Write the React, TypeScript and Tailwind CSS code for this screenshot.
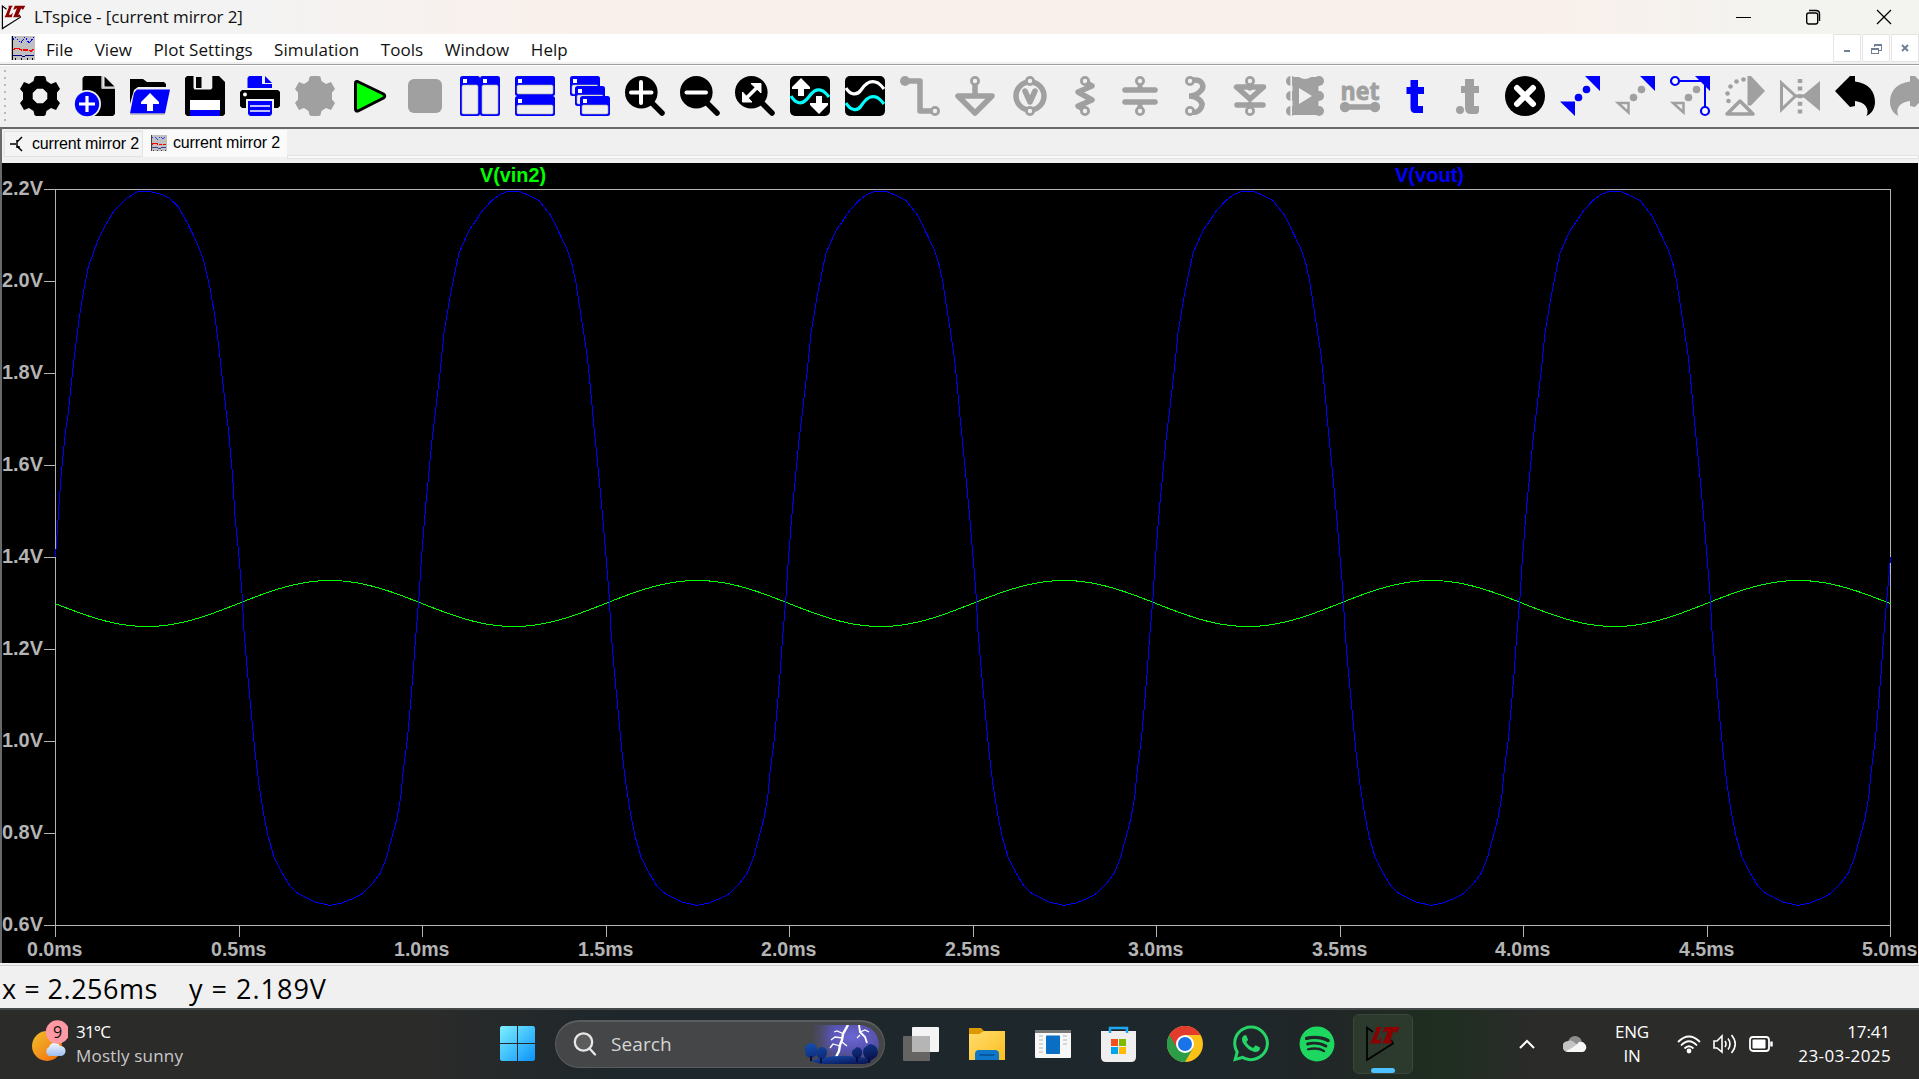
import React from "react";
import { FaWhatsapp, FaSpotify } from "react-icons/fa";

const GRAY = "#a0a0a0";
const BLUE = "#0000ff";
const FACE = "#f0f0f0";

function Icon({ children }: { children: React.ReactNode }) {
  return (
    <svg className="h-10 w-10 shrink-0 overflow-visible" viewBox="0 0 40 40" fill="none">
      {children}
    </svg>
  );
}

const GEAR =
  "M14.5 1L16 0H24L25.5 1L26.5 5L31 8L36 6L40 13L37 16.5V23.5L40 27L36 34L31 32L26.5 35L25.5 39L24 40H16L14.5 39L13.5 35L9 32L4 34L0 27L3 23.5V16.5L0 13L4 6L9 8L13.5 5Z";

function Win({ x, y, w, h }: { x: number; y: number; w: number; h: number }) {
  return (
    <g>
      <rect x={x} y={y} width={w} height={h} rx="2.5" fill={BLUE} />
      <rect x={x + 2} y={y + 9} width={w - 4} height={h - 11} rx="1.5" fill={FACE} stroke="#a8a8a8" strokeWidth="0.6" />
      <rect x={x + 3} y={y + 3} width="4" height="4" fill="#fff" />
    </g>
  );
}

function Lens({ children }: { children: React.ReactNode }) {
  return (
    <Icon>
      <path d="M27 27L37 37" stroke="#000" strokeWidth="5.5" strokeLinecap="round" />
      <circle cx="16.3" cy="16.3" r="16.3" fill="#000" />
      {children}
    </Icon>
  );
}

function Pin({ x, y, c = GRAY }: { x: number; y: number; c?: string }) {
  return <circle cx={x} cy={y} r="3.6" fill={FACE} stroke={c} strokeWidth="2.8" />;
}

const toolbar: React.ReactNode[] = [
  <Icon><path fillRule="evenodd" fill="#000" d={GEAR + "M17 12.7L12.7 17V23L17 27.3H23L27.3 23V17L23 12.7Z"} /></Icon>,
  <Icon>
    <path d="M9.5 0H26.5V12.5H40V38L38 40H7.5V2Z" fill="#000" />
    <path d="M29.5 0.5L39.5 10.5H29.5Z" fill="#000" />
    <path d="M27.5 0V12H40" stroke="#c8c8c8" strokeWidth="1.5" />
    <circle cx="12" cy="28" r="14" fill={FACE} />
    <circle cx="12" cy="28" r="12.2" fill={BLUE} />
    <path d="M12 20V36M4 28H20" stroke="#fff" strokeWidth="3.2" />
  </Icon>,
  <Icon>
    <path d="M0 28V3H13L17 6H34L36 8V11H8L4 14Z" fill="#000" />
    <path d="M7 13.5H40L35 37.5H0L4 17Z" fill={BLUE} />
    <path d="M0 38.2H35" stroke="#aaa" strokeWidth="1" />
    <path d="M20 17L29 26V28H23V35H17V28H11V26Z" fill="#fff" />
  </Icon>,
  <Icon>
    <path d="M2 0H34L40 6V38L38 40H2L0 38V2Z" fill="#000" />
    <path d="M8.5 0H27.3V12L26 13.5H9.5L8.5 12Z" fill={FACE} />
    <path d="M11 1H16.5V12H11Z" fill="#000" />
    <path d="M5 24H35V34H5Z" fill="#fff" />
    <path d="M5 34H35V40H5Z" fill={BLUE} />
  </Icon>,
  <Icon>
    <path d="M9 0H22V8H32V12H7.5V2Z" fill={BLUE} />
    <path d="M25 0L32 7H25Z" fill={BLUE} />
    <path d="M2 14H38L40 16V30L38 32H34V23H6V32H2L0 30V16Z" fill="#000" />
    <circle cx="5" cy="18.5" r="2" fill="#fff" />
    <path d="M8 25H32V38L30 40H10L8 38Z" fill={BLUE} />
    <path d="M10 30H30M10 35H30" stroke="#fff" strokeWidth="1.6" />
  </Icon>,
  <Icon><path d={GEAR} fill={GRAY} /></Icon>,
  <Icon><path d="M5.5 7Q5.5 5 7.5 5.5L33.5 18Q36 20 33.5 22L8 35Q5.5 35.5 5.5 33Z" fill="#00ff00" stroke="#000" strokeWidth="3" strokeLinejoin="round" /></Icon>,
  <Icon><rect x="3" y="3" width="34" height="34" rx="6" fill={GRAY} /></Icon>,
  <Icon><Win x={0} y={0} w={20} h={40} /><Win x={20} y={0} w={20} h={40} /></Icon>,
  <Icon><Win x={0} y={0} w={40} h={20} /><Win x={0} y={20} w={40} h={20} /></Icon>,
  <Icon><Win x={0} y={0} w={30} h={20} /><Win x={5} y={10} w={30} h={20} /><Win x={10} y={20} w={30} h={20} /></Icon>,
  <Lens><path d="M16 6V27M6 16.5H26.5" stroke="#fff" strokeWidth="4" strokeLinecap="round" /></Lens>,
  <Lens><path d="M6.5 16.5H26" stroke="#fff" strokeWidth="4" strokeLinecap="round" /></Lens>,
  <Lens>
    <path d="M10 23.5L23.5 10" stroke="#fff" strokeWidth="3.5" />
    <path d="M16 7.5H26V17ZM7.5 16V26H17Z" fill="#fff" stroke="#fff" strokeLinejoin="round" />
  </Lens>,
  <Icon>
    <rect width="40" height="40" rx="5" fill="#000" />
    <path d="M1 20C5 27 11 29 16 24S24 11 33 15Q36 17 39 21" stroke="#00ffff" strokeWidth="3.2" />
    <path d="M11 2L20 11V13H14V20H8V13H2V11ZM29 38L38 29V27H32V20H26V27H20V29Z" fill="#fff" />
  </Icon>,
  <Icon>
    <rect width="40" height="40" rx="5" fill="#000" />
    <path d="M1 12C5 19 12 20 16 14S25 3 33 7Q36 9 39 13" stroke="#fff" strokeWidth="3.2" />
    <path d="M1 27C5 34 12 36 16 30S25 18 33 22Q36 24 39 28" stroke="#00ffff" strokeWidth="3.2" />
  </Icon>,
  <Icon>
    <path d="M5 5H20V35H34" stroke={GRAY} strokeWidth="5.5" strokeLinejoin="round" />
    <circle cx="5" cy="5" r="5" fill={GRAY} /><Pin x={35} y={35} />
  </Icon>,
  <Icon>
    <path d="M20 8V19" stroke={GRAY} strokeWidth="5.5" />
    <path d="M3 20H37L20 37Z" stroke={GRAY} strokeWidth="5.5" strokeLinejoin="round" /><Pin x={20} y={5} />
  </Icon>,
  <Icon>
    <circle cx="20" cy="20" r="14" stroke={GRAY} strokeWidth="5.5" />
    <path d="M15 15L20 26L25 15" stroke={GRAY} strokeWidth="5.5" strokeLinecap="round" strokeLinejoin="round" />
    <Pin x={20} y={5} /><Pin x={20} y={35} />
  </Icon>,
  <Icon>
    <path d="M20 6L27 10L13 16L27 24L13 30L20 34" stroke={GRAY} strokeWidth="5.5" strokeLinejoin="round" />
    <Pin x={20} y={5} /><Pin x={20} y={35} />
  </Icon>,
  <Icon>
    <path d="M5 14H35M5 26H35" stroke={GRAY} strokeWidth="5.5" strokeLinecap="round" />
    <path d="M20 7V14M20 26V33" stroke={GRAY} strokeWidth="5" />
    <Pin x={20} y={5} /><Pin x={20} y={35} />
  </Icon>,
  <Icon>
    <path d="M18 4C28 3 30 11 25.500 15C23 18 19 20 14 20C22 20 29 26 26.500 31C24 36 21 37 16 36" stroke={GRAY} strokeWidth="5.5" />
    <Pin x={15} y={5} /><Pin x={15} y={35} />
  </Icon>,
  <Icon>
    <path d="M6.5 11H33.5L20 23ZM7 29H33M20 7V12M20 28V34" stroke={GRAY} strokeWidth="5.5" strokeLinejoin="round" strokeLinecap="round" />
    <Pin x={20} y={5} /><Pin x={20} y={35} />
  </Icon>,
  <Icon>
    <g fill={GRAY}>
      <circle cx="6" cy="5" r="5" /><circle cx="6" cy="20" r="5" /><circle cx="6" cy="35" r="5" />
      <circle cx="34" cy="5" r="5" /><circle cx="34" cy="20" r="5" /><circle cx="34" cy="35" r="5" />
    </g>
    <path d="M6.2 0V40" stroke={FACE} strokeWidth="1.6" />
    <path d="M7.5 1H14Q20 5 26 1H33.5V39H7.5Z" fill={GRAY} />
    <path d="M14 12L27 20L14 28Z" fill={FACE} />
  </Icon>,
  <Icon>
    <text x="0.5" y="24" textLength="39" lengthAdjust="spacingAndGlyphs" fill={GRAY} stroke={GRAY} strokeWidth="0.8" className="font-['Open_Sans'] text-[25px] leading-none font-bold">net</text>
    <path d="M5 31H35" stroke={GRAY} strokeWidth="5.5" />
    <circle cx="5" cy="31" r="5.2" fill={GRAY} /><circle cx="35" cy="31" r="5.2" fill={GRAY} />
  </Icon>,
  <Icon><path d="M15.5 4H23V11H29V18H23V30H28V37H20Q15.5 37 15.5 32V18H11.5V11H15.5Z" fill={BLUE} /></Icon>,
  <Icon>
    <path d="M15 3H24V10H29V17H24V30H29V36L27 38H21Q15 38 15 32V17H11V10H15Z" fill={GRAY} />
    <circle cx="10" cy="34" r="4" fill={GRAY} />
  </Icon>,
  <Icon>
    <circle cx="20" cy="20" r="20" fill="#000" />
    <path d="M12 12L28 28M28 12L12 28" stroke="#fff" strokeWidth="6" strokeLinecap="round" />
  </Icon>,
  <Icon>
    <path d="M25 0H40V15ZM0 25.5H15V40Z" fill={BLUE} />
    <circle cx="18.5" cy="21.5" r="3.8" fill={BLUE} /><circle cx="26.5" cy="13.5" r="3.8" fill={BLUE} />
  </Icon>,
  <Icon>
    <path d="M25 0H40V15Z" fill={BLUE} />
    <path d="M3 27H13.5V36.5Z" stroke={GRAY} strokeWidth="2.5" />
    <circle cx="18.5" cy="21.5" r="3.8" fill={GRAY} /><circle cx="26.5" cy="13.5" r="3.8" fill={GRAY} />
  </Icon>,
  <Icon>
    <path d="M25 0H40V15Z" fill={BLUE} />
    <path d="M3 27H13.5V36.5Z" stroke={GRAY} strokeWidth="2.5" />
    <circle cx="18.5" cy="21.5" r="3.8" fill={GRAY} /><circle cx="26.5" cy="13.5" r="3.8" fill={GRAY} />
    <path d="M9 5H34M35 6V31" stroke={BLUE} strokeWidth="2" />
    <circle cx="5" cy="5" r="4" stroke={BLUE} strokeWidth="2.2" fill="#fff" />
    <circle cx="35" cy="35" r="4" stroke={BLUE} strokeWidth="2.2" fill="#fff" />
  </Icon>,
  <Icon>
    <path d="M22.5 0H26L40 15L26 29.5H22.5Z" fill={GRAY} />
    <path d="M2 38L15 25L28 38Z" fill={FACE} stroke={GRAY} strokeWidth="3.5" strokeLinejoin="round" />
    <g fill={GRAY}><circle cx="18.5" cy="3.5" r="2.3" /><circle cx="11.5" cy="5.5" r="2.3" /><circle cx="5.5" cy="10.5" r="2.3" /><circle cx="2.5" cy="17.5" r="2.3" /><circle cx="3.5" cy="25" r="2.3" /></g>
  </Icon>,
  <Icon>
    <path d="M1.5 7L15.5 20L1.5 33.5Z" stroke={GRAY} strokeWidth="3" />
    <path d="M40 5V35L22 20Z" fill={GRAY} />
    <path d="M20 3V38" stroke={GRAY} strokeWidth="4.5" strokeDasharray="4 3.6" />
    <path d="M16 20H24" stroke={GRAY} strokeWidth="3" />
  </Icon>,
  <Icon><path d="M0 15L15 0H20V5.5C34 7 40 16 40 26C40 33 36 38 31.5 40C35 33 30 26 20 25V30L15 31Z" fill="#000" /></Icon>,
  <Icon><path d="M40 15L25 0H20V5.5C6 7 0 16 0 26C0 33 4 38 8.5 40C5 33 10 26 20 25V30L25 31Z" fill={GRAY} /></Icon>,
];

function LTLogo({ className }: { className: string }) {
  return (
    <svg className={className} viewBox="0 0 36 36" fill="none">
      <path d="M8 6L2 1.5V34L28 17.5L26 14" stroke="#000" strokeWidth="1.7" />
      <path d="M11 1H17L15 4L11.5 14H14L17 11L15.5 17.5H5L7 14L11 4ZM20 1H35L32 6.5H30.5L29 4.5L25 14.5H27L26 17.5H17.5L19 14.5L23 4.5L19 6.5H17.5Z" fill="#8b0000" />
    </svg>
  );
}

function WaveDoc({ className }: { className: string }) {
  return (
    <svg className={className} viewBox="0 0 24 24" fill="none" shapeRendering="crispEdges">
      <rect width="24" height="24" fill="#c0c0c0" />
      <path d="M2 4L4 1L10 7L14 1L18 7L23 1" stroke={BLUE} strokeDasharray="2 1" />
      <path d="M1 14L6 12L11 14H16L20 15L23 13" stroke="#ff0000" strokeWidth="1.5" strokeDasharray="5 1" />
      <path d="M1 19H9L11 20H14L16 19H23" stroke="#000080" />
      <path d="M1 0V24M4 22V24M10 22V24M16 22V24M21 22V24" stroke="#000" />
    </svg>
  );
}

/* Plot frame edges and the width of one signal period (1 ms). */
const X0 = 55, X1 = 1890, Y0 = 189, Y1 = 925, PERIOD = 367;

const firstPeak = [
  [55.5, 557], [56, 549], [56.6, 541], [57.5, 527], [61.3, 473], [65.3, 433], [68.3, 413], [71.3, 383], [74.3, 357], [79.3, 317],
  [83.3, 293], [88.3, 267], [93.3, 253], [98, 240], [105, 226], [113.3, 212], [125.7, 199], [137.7, 191.5], [150, 191.5],
  [162, 194.5], [169, 198], [177.7, 206], [186.7, 221.7], [196, 240.7], [203.3, 259], [210, 288], [215, 317],
  [218.3, 343], [223.3, 387], [228.7, 432], [232.7, 477], [235, 517], [238.7, 553], [242.3, 597],
];
const trough = [
  [243.7, 627], [247, 667], [251, 710], [255, 752], [259, 785], [263.3, 812], [268.3, 837], [274, 857], [282, 873],
  [290, 886], [297.3, 893], [315, 902], [330, 905.5], [341.7, 903], [351.7, 899], [361.7, 894], [372.3, 884],
  [380.3, 873], [386.7, 857], [391.7, 838], [396.7, 820], [400.7, 797], [403.3, 770], [407.3, 740],
  [410.3, 707], [413.3, 670], [415.7, 637],
];
const peak = [
  [419, 597], [421.3, 560], [425.3, 510], [431.7, 443], [440, 373], [444, 333], [450, 297], [454, 277], [459, 253],
  [469.3, 230], [475, 222], [481.7, 211.7], [492.3, 200], [500, 194.5], [507.3, 191.5], [520, 191.5],
  [526.7, 194.5], [538.7, 200.3], [551, 215.7], [561.7, 238], [567.3, 250], [571.7, 263], [576, 283],
  [579, 303], [583.3, 330], [587.3, 357], [590.7, 390], [593.3, 420], [598.3, 470], [602.7, 517],
  [606, 557], [609.3, 597],
];

const vout: number[][] = [...firstPeak];
for (let k = 0; k < 5; k++) {
  trough.forEach(([x, y]) => vout.push([x + k * PERIOD, y]));
  if (k < 4) peak.forEach(([x, y]) => vout.push([x + k * PERIOD, y]));
}
vout.push([1887, 597], [1889, 575], [1890.5, 557]);

const vin: number[][] = [];
for (let x = X0; x <= X1 + 3; x += 3) {
  const t = Math.min(x, X1 + 1);
  vin.push([t, 603.5 + 23 * Math.sin((2 * Math.PI * (t - X0)) / PERIOD)]);
}

const toPoints = (p: number[][]) => p.map(([x, y]) => `${x},${y}`).join(" ");

function Plot() {
  const label = "font-['Liberation_Sans'] text-[19.5px] font-bold";
  return (
    <svg className="block h-[800px] w-[1916px] bg-black" viewBox="2 163 1916 800" fill="none">
      <g shapeRendering="crispEdges" stroke="#b4b4b4" strokeWidth="1">
        <rect x={X0 + 0.5} y={Y0 + 0.5} width={X1 - X0} height={Y1 - Y0} />
        {Array.from({ length: 9 }, (_, i) => (
          <path key={i} d={`M44 ${Y0 + i * 92 + 0.5}H55`} />
        ))}
        {Array.from({ length: 11 }, (_, i) => (
          <path key={i} d={`M${Math.round(X0 + i * 183.5) + 0.5} 925V937`} />
        ))}
      </g>
      <polyline points={toPoints(vin)} stroke="#00ff00" shapeRendering="crispEdges" />
      <polyline points={toPoints(vout)} stroke="#0000ff" shapeRendering="crispEdges" />
      <g className={label} fill="#b4b4b4">
        {Array.from({ length: 9 }, (_, i) => (
          <text key={i} x="2" y={Y0 + i * 92 + 6} textLength="41" lengthAdjust="spacingAndGlyphs">
            {(2.2 - i * 0.2).toFixed(1)}V
          </text>
        ))}
        {Array.from({ length: 11 }, (_, i) => (
          <text key={i} x={Math.round(X0 + i * 183.5) - 28} y="956" textLength="55.5" lengthAdjust="spacingAndGlyphs">
            {(i * 0.5).toFixed(1)}ms
          </text>
        ))}
      </g>
      <g className={label}>
        <text x="480" y="182" fill="#00ff00" textLength="66" lengthAdjust="spacingAndGlyphs">V(vin2)</text>
        <text x="1395" y="182" fill="#0000ff" textLength="69" lengthAdjust="spacingAndGlyphs">V(vout)</text>
      </g>
    </svg>
  );
}

function ChildButton({ children }: { children: React.ReactNode }) {
  return (
    <div className="flex h-7 w-7 items-center justify-center border border-[#e4e4e4] bg-white">
      <svg className="h-3 w-3" viewBox="0 0 12 12" fill="none" stroke="#6f8093" shapeRendering="crispEdges">{children}</svg>
    </div>
  );
}

function Taskbar() {
  return (
    <div className="flex h-[71px] shrink-0 items-center border-t-2 border-[#454848] bg-[linear-gradient(90deg,#2b2b2a_0%,#2b2b2a_22%,#1e272b_32%,#1e272b_64%,#212627_69%,#1f2e20_75%,#2b2b2a_80%,#2b2b2a_100%)] pb-[2px] pr-[29px] font-['Open_Sans','Noto_Sans',sans-serif] text-white">
      <div className="flex w-[500px] items-center pl-8">
        <svg className="mb-[6px] h-[42px] w-9" viewBox="0 0 36 42">
          <defs>
            <linearGradient id="sun" x1="0" y1="0" x2="1" y2="1"><stop stopColor="#f0c22c" /><stop offset="1" stopColor="#f4660c" /></linearGradient>
            <linearGradient id="cloud" x1="0" y1="0" x2="0" y2="1"><stop stopColor="#f2f7ff" /><stop offset="1" stopColor="#9dbdf0" /></linearGradient>
          </defs>
          <circle cx="15" cy="26" r="15" fill="url(#sun)" />
          <path d="M17 36A5 5 0 0 1 17 27A6 6 0 0 1 28 26A5 5 0 0 1 29 36Z" fill="url(#cloud)" />
          <circle cx="25.5" cy="12" r="11.7" fill="#ff99a4" />
          <text x="21" y="17.5" fill="#111" className="font-['Open_Sans'] text-[16px]">9</text>
        </svg>
        <div className="ml-2 text-[17px] leading-6">
          <div className="tracking-[-0.8px]">31°C</div>
          <div className="tracking-[0.2px] text-[#c9c9c9]">Mostly sunny</div>
        </div>
      </div>

      <svg className="h-[35px] w-[35px]" viewBox="0 0 35 35">
        <defs><linearGradient id="win" x1="0" y1="0" x2="1" y2="1"><stop stopColor="#7df0ff" /><stop offset="1" stopColor="#0a93fb" /></linearGradient></defs>
        <path d="M1.5 0H17V17H0V1.5ZM18 0H33.5L35 1.5V17H18ZM0 18H17V35H1.5L0 33.5ZM18 18H35V33.5L33.5 35H18Z" fill="url(#win)" />
      </svg>

      <div className="relative ml-5 flex h-12 w-[330px] items-center overflow-hidden rounded-full border border-t-2 border-[#5a5d5e] bg-[#444647] pl-[17px]">
        <svg className="h-6 w-6" viewBox="0 0 24 24" fill="none" stroke="#e8e8e8" strokeWidth="2.3">
          <circle cx="10.5" cy="10" r="8.7" fill="#5c5c5c" /><path d="M16.5 16.5L22 22.5" strokeLinecap="round" />
        </svg>
        <span className="ml-[14px] text-[19px] tracking-[0.1px] text-[#d6d6d6]">Search</span>
        <svg className="ml-auto mr-[5px] h-[39px] w-[74px]" viewBox="0 0 74 39">
          <defs>
            <radialGradient id="sky" cx="0.6" cy="0.3" r="0.7"><stop stopColor="#6b68d4" /><stop offset="0.5" stopColor="#5853b0" /><stop offset="1" stopColor="#4b4a66" /></radialGradient>
            <linearGradient id="fade"><stop stopColor="#444647" /><stop offset="1" stopColor="#444647" stopOpacity="0" /></linearGradient>
            <linearGradient id="tree" x1="0" y1="0" x2="1" y2="1"><stop stopColor="#1450b4" /><stop offset="1" stopColor="#0a0f4a" /></linearGradient>
          </defs>
          <path d="M6 0H56Q73 3 74 20Q72 36 58 39H20Q8 38 6 30Z" fill="url(#sky)" />
          <rect x="5" width="22" height="39" fill="url(#fade)" />
          <path d="M43 0L38 9L37 15L35 20L34 26L31 32" stroke="#fff" strokeWidth="2.4" fill="none" />
          <path d="M39 9L32 6L29 7M38 13L30 12L26 15M35 21L28 19L25 23M55 7L60 5L64 7M37 17L42 21M55 10L52 13" stroke="#fff" strokeWidth="1.3" fill="none" />
          <path d="M54 0L55 7L60 12L62 18" stroke="#fff" strokeWidth="1.9" fill="none" />
          <g fill="url(#tree)">
            <path d="M6 36Q30 27 68 34Q64 39 58 39H16Z" />
            <path d="M5 18Q12 18 12 26Q12 33 6 33Q0 33 0 26Q0 19 5 18ZM17 22Q23 23 22 29Q20 35 15 34Q11 32 11 27Q13 22 17 22ZM52 22Q58 23 57 29Q55 35 51 33Q46 31 47 26ZM65 19Q73 20 73 28Q71 36 62 34Q56 30 59 23Z" />
          </g>
          <path d="M6 31V36M16 33V38M52 32V37M64 33V38" stroke="#080c3a" strokeWidth="2" />
        </svg>
      </div>

      <div className="ml-[18px] flex items-center gap-[30px]">
        <svg className="h-9 w-9" viewBox="0 0 36 36">
          <rect x="9" y="1" width="27" height="25" rx="1" fill="#f4f4f4" />
          <rect x="0" y="10" width="27" height="25" rx="1" fill="#666463" />
          <rect x="9" y="10" width="18" height="16" fill="#b5b5b5" />
        </svg>
        <svg className="h-9 w-9" viewBox="0 0 36 36">
          <defs><linearGradient id="fold" x1="0" y1="0" x2="1" y2="1"><stop stopColor="#ffdc70" /><stop offset="1" stopColor="#fcbf1d" /></linearGradient></defs>
          <path d="M0 2H12L15 5V12H0Z" fill="#dd9a00" />
          <path d="M0 8H10L15 5H36V34H0Z" fill="url(#fold)" />
          <path d="M6 34V28Q6 24 10 24H26Q30 24 30 28V34Z" fill="#0f77c9" />
          <path d="M11 29H25" stroke="#084f91" strokeWidth="1.5" strokeLinecap="round" />
        </svg>
        <svg className="h-9 w-9" viewBox="0 0 36 36">
          <rect y="4" width="36" height="28" rx="1" fill="#f7f7f7" /><path d="M0 4H36V7H0Z" fill="#777" />
          <rect x="11" y="9.5" width="14" height="18.5" rx="0.7" fill="#0b6ec5" />
          <path d="M4 10H8M4 14H8M4 18H8M4 22H8M4 26H8M28 10H32M28 14H32M28 18H32" stroke="#d6d6d6" strokeWidth="2" />
        </svg>
        <svg className="h-9 w-9" viewBox="0 0 36 36">
          <path d="M9 8V2H26V8" stroke="#1ea7f2" strokeWidth="2.5" fill="none" />
          <path d="M0 5H35V31Q35 36 30 36H5Q0 36 0 31Z" fill="#efefef" />
          <path d="M9 7V5M26 7V5" stroke="#1ea7f2" strokeWidth="2.5" />
          <path d="M10 13H17V20H10Z" fill="#f25022" /><path d="M18 13H25V20H18Z" fill="#7fba00" />
          <path d="M10 21H17V28H10Z" fill="#00a4ef" /><path d="M18 21H25V28H18Z" fill="#ffb900" />
        </svg>
        <svg className="h-9 w-9" viewBox="0 0 36 36">
          <circle cx="18" cy="18" r="18" fill="#fbc116" />
          <path d="M18 18L2.4 9A18 18 0 0 0 18 36L25.8 22.5Z" fill="#2b9d48" />
          <path d="M2.4 9A18 18 0 0 1 33.6 9H18L10.2 22.5Z" fill="#e33b2e" />
          <circle cx="18" cy="18" r="9" fill="#fff" /><circle cx="18" cy="18" r="7" fill="#1a73e8" />
        </svg>
        <FaWhatsapp className="h-[41px] w-9 text-[#25d366]" />
        <FaSpotify className="h-[36px] w-9 text-[#1ed760]" />
      </div>

      <div className="relative ml-[18px] flex h-[60px] w-[60px] items-center justify-center rounded-md border border-[#3a4639] bg-[#2c3a2d]">
        <LTLogo className="h-9 w-9" />
        <div className="absolute bottom-0 h-[5px] w-6 rounded-full bg-[#4cc2ff]" />
      </div>

      <div className="ml-auto flex items-center">
        <svg className="h-3 w-4" viewBox="0 0 16 12" fill="none" stroke="#fff" strokeWidth="2"><path d="M1 10L8 3L15 10" /></svg>
        <svg className="ml-7 h-4 w-6" viewBox="0 0 24 16">
          <circle cx="12" cy="7" r="7" fill="#8e8e8e" /><path d="M5 16A5 5 0 0 1 5 5Q9 3 14 9L16 16Z" fill="#c4c4c4" />
          <path d="M3 15Q12 11 16 6Q20 5 22 8A5 5 0 0 1 20 16H5Z" fill="#f7f7f7" />
        </svg>
        <div className="ml-[27px] w-[36px] text-center text-[17px] leading-6 tracking-[-0.2px]"><div>ENG</div><div>IN</div></div>
        <svg className="ml-[27px] h-5 w-6" viewBox="0 0 24 20" fill="none" stroke="#fff" strokeWidth="1.8">
          <path d="M1 8Q12 -3 23 8M4 11.5Q12 3 20 11.5M7.5 14.5Q12 10 16.5 14.5" /><circle cx="12" cy="17" r="1.5" fill="#fff" />
        </svg>
        <svg className="ml-3 h-5 w-6" viewBox="0 0 24 20" fill="none" stroke="#fff" strokeWidth="1.6">
          <path d="M1 7H4L9 2V18L4 14H1ZM12 7Q14 10 12 13M15 4.5Q19 10 15 15.5M18.5 1Q26 10 18.5 19" />
        </svg>
        <svg className="ml-3 h-5 w-6" viewBox="0 0 24 20" fill="none">
          <rect x="1" y="3" width="19" height="14" rx="3" stroke="#fff" strokeWidth="1.8" /><rect x="3.5" y="5.5" width="13" height="9" rx="1" fill="#fff" />
          <path d="M22.5 7.5V12.5" stroke="#fff" strokeWidth="2.5" />
        </svg>
        <div className="ml-[22px] w-[95px] whitespace-nowrap text-right text-[17px] leading-6"><div className="tracking-[-0.1px]">17:41</div><div className="-mr-[1px] tracking-[0.4px]">23-03-2025</div></div>
      </div>
    </div>
  );
}

export default function App() {
  return (
    <div className="flex h-[1079px] w-[1919px] flex-col overflow-hidden bg-[#f0f0f0] font-['Open_Sans','Noto_Sans',sans-serif] text-[#111]">
      <header className="flex h-[34px] shrink-0 items-center bg-[linear-gradient(90deg,#f3f3f3_0%,#f3f3f3_12%,#faf0eb_30%,#faf0eb_80%,#f3f3f0_92%)]">
        <LTLogo className="ml-[1px] h-[25px] w-[25px]" />
        <h1 className="ml-2 text-[17px] leading-6 tracking-[-0.13px]">LTspice - [current mirror 2]</h1>
        <div className="ml-auto mr-[27px] flex items-center gap-[54px]">
          <svg className="h-4 w-4" viewBox="0 0 16 16" stroke="#000" shapeRendering="crispEdges"><path d="M0 8.5H15" /></svg>
          <svg className="h-4 w-4" viewBox="0 0 16 16" fill="none" stroke="#000" strokeWidth="1.4"><rect x="0.7" y="4" width="11" height="11" rx="2" /><path d="M3 1.5H10Q13.5 1.5 13.5 5V12" /></svg>
          <svg className="h-4 w-4" viewBox="0 0 16 16" stroke="#000" strokeWidth="1.3"><path d="M1 1L15 15M15 1L1 15" /></svg>
        </div>
      </header>

      <nav className="flex h-7 shrink-0 items-center bg-white">
        <WaveDoc className="ml-[11px] h-6 w-6" />
        <div className="ml-[11px] flex gap-[21.5px] whitespace-nowrap pt-[3px] text-[17px] leading-6 tracking-[0.06px]">
          <span>File</span><span>View</span><span>Plot Settings</span><span>Simulation</span><span>Tools</span><span>Window</span><span>Help</span>
        </div>
        <div className="ml-auto flex gap-[1px]">
          <ChildButton><path d="M3 9H9" strokeWidth="2" /></ChildButton>
          <ChildButton><path d="M1 6H8V11H1ZM1 7H8M4 5V2H11V8H8M4 3H11" /></ChildButton>
          <ChildButton><path d="M3 3L9 9M9 3L3 9" strokeWidth="2" shapeRendering="auto" /></ChildButton>
        </div>
      </nav>

      <div className="mt-[2px] flex h-[63px] shrink-0 items-center overflow-hidden border-t border-[#a0a0a0] shadow-[inset_0_1px_0_#fff]">
        <div className="ml-1 mr-[14px] h-[52px] w-[2px] shrink-0 bg-[repeating-linear-gradient(180deg,#b8b8b8_0px,#b8b8b8_2px,#f0f0f0_2px,#f0f0f0_7px)]" />
        <div className="flex gap-[15px]">{toolbar.map((icon, i) => <React.Fragment key={i}>{icon}</React.Fragment>)}</div>
      </div>

      <main className="flex h-[836px] shrink-0 flex-col border-l-2 border-t-2 border-[#696969]">
        <div className="flex h-[34px] items-start pl-[2px] pt-[1px] font-['Liberation_Sans',sans-serif] text-[16px] tracking-[-0.15px] text-black">
          <div className="mt-px flex h-[26px] w-[139px] items-center whitespace-nowrap border border-[#e2e2e2] bg-[#f4f4f4] pl-[5px]">
            <svg className="mr-2 h-4 w-[14px]" viewBox="0 0 14 16" fill="none" stroke="#000" strokeWidth="1.5"><path d="M0 8H6M7 4V12M7 6L12 1M7 10L12 15M9 10V13" /></svg>
            current mirror 2
          </div>
          <div className="flex h-[27px] w-[144px] items-center bg-[#fafafa] pb-[2px] pl-2">
            <WaveDoc className="mr-[6px] h-4 w-4" />
            current mirror 2
          </div>
          <div className="mt-[25px] h-1 flex-1 border border-[#e2e2e2] bg-[#fafafa]" />
        </div>
        <Plot />
      </main>

      <footer className="mt-[2px] flex h-[43px] shrink-0 items-center border-t border-[#cfcfcf] pl-[2px] pt-[3px] text-[27px] leading-9 text-black">
        <span className="w-[187px] tracking-[0.5px]">x = 2.256ms</span><span className="tracking-[1px]">y = 2.189V</span>
      </footer>
      <Taskbar />
    </div>
  );
}
